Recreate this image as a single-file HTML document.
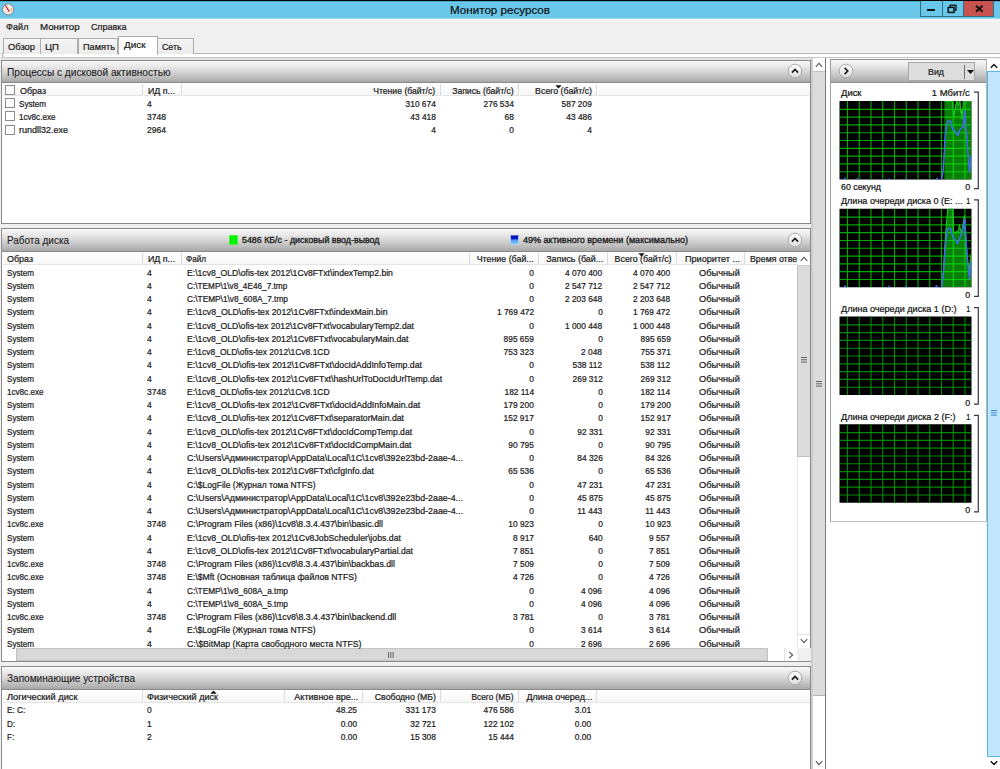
<!DOCTYPE html>
<html lang="ru"><head><meta charset="utf-8"><title>Монитор ресурсов</title>
<style>
html,body{margin:0;padding:0;}
body{width:1000px;height:769px;position:relative;overflow:hidden;background:#f0f0f0;font-family:"Liberation Sans", sans-serif;color:#1a1a1a;}
#app{position:absolute;left:0;top:0;width:1000px;height:769px;overflow:hidden;}
#app div{position:absolute;box-sizing:border-box;}
#app span{position:absolute;white-space:pre;display:block;-webkit-text-stroke:0.22px currentColor;}
#app svg{position:absolute;overflow:visible;}
</style></head><body><div id="app">
<div style="left:0px;top:0px;width:1000px;height:1px;background:#000;"></div>
<div style="left:0px;top:1px;width:1000px;height:17px;background:#69c8ea;"></div>
<div style="left:0px;top:1px;width:1000px;height:1px;background:#4fa9cc;"></div>
<div style="left:0px;top:18px;width:1000px;height:1px;background:#9fd8ec;"></div>
<div style="left:0px;top:19px;width:1000px;height:3px;background:#f4f4f6;"></div>
<svg style="left:0px;top:1px" width="18" height="17" viewBox="0 1 18 17"><circle cx="8.2" cy="9.4" r="5.6" fill="#f6f1ea" stroke="#74858a" stroke-width="1"/><circle cx="8.2" cy="9.4" r="4.3" fill="none" stroke="#e9ddd0" stroke-width="0.8"/><path d="M4.6 5.3 L5.9 5.2 L9.9 11.2 L8.8 12 Z" fill="#dc1414"/><path d="M11.3 8 L11.5 10.9" stroke="#ee8a5a" stroke-width="0.9"/></svg>
<div style="left:920px;top:1px;width:73.5px;height:15.5px;background:#69c8ea;border:1px solid #2d6f88;border-top:none;"></div>
<div style="left:941.5px;top:1px;width:1px;height:15px;background:#2d6f88;"></div>
<div style="left:962.5px;top:1px;width:30px;height:14.6px;background:#c8524f;border-left:1px solid #2d6f88;"></div>
<div style="left:927px;top:9.3px;width:7.8px;height:2px;background:#111;"></div>
<svg style="left:947px;top:4px" width="11" height="10" viewBox="0 0 11 10"><rect x="3.2" y="1.2" width="5.8" height="5" fill="none" stroke="#111" stroke-width="1.3"/><rect x="1.2" y="3.4" width="5.8" height="5" fill="#69c8ea" stroke="#111" stroke-width="1.5"/></svg>
<svg style="left:975px;top:5px" width="9" height="8" viewBox="0 0 9 8"><path d="M1 0.8 L7.6 6.8 M7.6 0.8 L1 6.8" stroke="#111" stroke-width="2"/></svg>
<div style="left:1.5px;top:53.2px;width:999px;height:4.6px;background:#fff;border-top:1px solid #b4b4b4;border-bottom:1px solid #c4c4c4;border-left:1px solid #b4b4b4;"></div>
<div style="left:2.5px;top:38.3px;width:38px;height:15.4px;background:linear-gradient(#f4f4f4,#ebebeb);border:1px solid #acacac;border-bottom:none;"></div>
<div style="left:40px;top:38.3px;width:37.5px;height:15.4px;background:linear-gradient(#f4f4f4,#ebebeb);border:1px solid #acacac;border-bottom:none;"></div>
<div style="left:77.5px;top:38.3px;width:40px;height:15.4px;background:linear-gradient(#f4f4f4,#ebebeb);border:1px solid #acacac;border-bottom:none;"></div>
<div style="left:157px;top:38.3px;width:36.5px;height:15.4px;background:linear-gradient(#f4f4f4,#ebebeb);border:1px solid #acacac;border-bottom:none;"></div>
<div style="left:117.5px;top:36px;width:40px;height:19px;background:#fff;border:1px solid #acacac;border-bottom:none;"></div>
<div style="left:0px;top:58px;width:811px;height:2px;background:#e6e6ea;"></div>
<div style="left:1px;top:59.5px;width:810px;height:164.0px;background:#fff;border:1px solid #8a8a8a;"></div>
<div style="left:2px;top:60.5px;width:808px;height:21.8px;background:linear-gradient(#f9f9f9 0%,#e6e6e6 30%,#cacaca 65%,#a8a8a8 100%);"></div>
<div style="left:2px;top:82.1px;width:808px;height:1.2px;background:#8a8a8a;"></div>
<svg style="left:787px;top:63.099999999999994px" width="16" height="16" viewBox="0 0 16 16"><defs><linearGradient id="g59" x1="0" y1="0" x2="0" y2="1"><stop offset="0" stop-color="#ffffff"/><stop offset="1" stop-color="#dcdcdc"/></linearGradient></defs><circle cx="8" cy="8" r="6.8" fill="url(#g59)" stroke="#a2a2a2" stroke-width="0.9"/><path d="M4.9 9.6 L8 6.5 L11.1 9.6" fill="none" stroke="#1a1a1a" stroke-width="1.7"/></svg>
<div style="left:2.5px;top:83.3px;width:807.5px;height:13px;background:linear-gradient(#ffffff,#f7f7f7);border-bottom:1px solid #e4e4e4;"></div>
<div style="left:141.5px;top:83.5px;width:1px;height:12.5px;background:#dcdcdc;"></div>
<div style="left:142.5px;top:83.5px;width:1px;height:12.5px;background:#fafafa;"></div>
<div style="left:181.0px;top:83.5px;width:1px;height:12.5px;background:#dcdcdc;"></div>
<div style="left:182.0px;top:83.5px;width:1px;height:12.5px;background:#fafafa;"></div>
<div style="left:440.0px;top:83.5px;width:1px;height:12.5px;background:#dcdcdc;"></div>
<div style="left:441.0px;top:83.5px;width:1px;height:12.5px;background:#fafafa;"></div>
<div style="left:518.0px;top:83.5px;width:1px;height:12.5px;background:#dcdcdc;"></div>
<div style="left:519.0px;top:83.5px;width:1px;height:12.5px;background:#fafafa;"></div>
<div style="left:595.5px;top:83.5px;width:1px;height:12.5px;background:#dcdcdc;"></div>
<div style="left:596.5px;top:83.5px;width:1px;height:12.5px;background:#fafafa;"></div>
<div style="left:5px;top:85px;width:10px;height:10px;background:#fff;border:1px solid #8c8c8c;"></div>
<svg style="left:554.5px;top:84.5px" width="7" height="4" viewBox="0 0 7 4"><path d="M0.3 0.2 L6.7 0.2 L3.5 3.6 Z" fill="#111"/></svg>
<div style="left:5px;top:98.0px;width:10px;height:10px;background:#fff;border:1px solid #8c8c8c;"></div>
<div style="left:5px;top:111.25px;width:10px;height:10px;background:#fff;border:1px solid #8c8c8c;"></div>
<div style="left:5px;top:124.5px;width:10px;height:10px;background:#fff;border:1px solid #8c8c8c;"></div>
<div style="left:1px;top:228px;width:810px;height:433.5px;background:#fff;border:1px solid #8a8a8a;"></div>
<div style="left:2px;top:229px;width:808px;height:21.8px;background:linear-gradient(#f9f9f9 0%,#e6e6e6 30%,#cacaca 65%,#a8a8a8 100%);"></div>
<div style="left:2px;top:250.6px;width:808px;height:1.2px;background:#8a8a8a;"></div>
<svg style="left:787px;top:231.6px" width="16" height="16" viewBox="0 0 16 16"><defs><linearGradient id="g228" x1="0" y1="0" x2="0" y2="1"><stop offset="0" stop-color="#ffffff"/><stop offset="1" stop-color="#dcdcdc"/></linearGradient></defs><circle cx="8" cy="8" r="6.8" fill="url(#g228)" stroke="#a2a2a2" stroke-width="0.9"/><path d="M4.9 9.6 L8 6.5 L11.1 9.6" fill="none" stroke="#1a1a1a" stroke-width="1.7"/></svg>
<div style="left:229px;top:235px;width:9px;height:10px;background:#00f200;border:1px solid #4cf04c;"></div>
<div style="left:510px;top:235px;width:9px;height:10px;background:linear-gradient(#0010c4 0%,#0010c4 36%,#4f9cf5 48%,#86c4ff 100%);border:1px solid #b4d2ee;border-top-color:#5a68c8;"></div>
<div style="left:2.5px;top:251.8px;width:795.0px;height:13px;background:linear-gradient(#ffffff,#f7f7f7);border-bottom:1px solid #e4e4e4;"></div>
<div style="left:141.5px;top:252px;width:1px;height:12.5px;background:#dcdcdc;"></div>
<div style="left:142.5px;top:252px;width:1px;height:12.5px;background:#fafafa;"></div>
<div style="left:181.0px;top:252px;width:1px;height:12.5px;background:#dcdcdc;"></div>
<div style="left:182.0px;top:252px;width:1px;height:12.5px;background:#fafafa;"></div>
<div style="left:468.5px;top:252px;width:1px;height:12.5px;background:#dcdcdc;"></div>
<div style="left:469.5px;top:252px;width:1px;height:12.5px;background:#fafafa;"></div>
<div style="left:538.0px;top:252px;width:1px;height:12.5px;background:#dcdcdc;"></div>
<div style="left:539.0px;top:252px;width:1px;height:12.5px;background:#fafafa;"></div>
<div style="left:607.0px;top:252px;width:1px;height:12.5px;background:#dcdcdc;"></div>
<div style="left:608.0px;top:252px;width:1px;height:12.5px;background:#fafafa;"></div>
<div style="left:675.5px;top:252px;width:1px;height:12.5px;background:#dcdcdc;"></div>
<div style="left:676.5px;top:252px;width:1px;height:12.5px;background:#fafafa;"></div>
<div style="left:744.0px;top:252px;width:1px;height:12.5px;background:#dcdcdc;"></div>
<div style="left:745.0px;top:252px;width:1px;height:12.5px;background:#fafafa;"></div>
<svg style="left:638px;top:252.6px" width="7" height="4" viewBox="0 0 7 4"><path d="M0.3 0.2 L6.7 0.2 L3.5 3.6 Z" fill="#111"/></svg>
<div style="left:2.5px;top:647.5px;width:808px;height:13.2px;background:#f0f0f0;"></div>
<div style="left:2.5px;top:647.5px;width:13px;height:13px;background:#fff;"></div>
<svg style="left:6px;top:650.5px" width="6" height="8" viewBox="0 0 6 8"><path d="M4.8 0.8 L1.4 4 L4.8 7.2" fill="none" stroke="#555" stroke-width="1.1"/></svg>
<div style="left:2.5px;top:647.5px;width:795px;height:13.2px;background:#fff;"></div>
<div style="left:16px;top:648px;width:752px;height:12.5px;background:#d8d8d8;border:1px solid #c4c4c4;"></div>
<div style="left:784px;top:648px;width:1px;height:12px;background:#e8e8e8;"></div>
<svg style="left:387.5px;top:651.5px" width="6" height="6" viewBox="0 0 6 6"><path d="M0.5 0 V6 M2.8 0 V6 M5.1 0 V6" stroke="#555" stroke-width="0.9"/></svg>
<div style="left:784px;top:648px;width:13px;height:13px;background:#fff;border-left:1px solid #e2e2e2;"></div>
<svg style="left:787.5px;top:650.5px" width="6" height="8" viewBox="0 0 6 8"><path d="M1.2 0.8 L4.6 4 L1.2 7.2" fill="none" stroke="#555" stroke-width="1.1"/></svg>
<div style="left:797.5px;top:251.8px;width:12.8px;height:396px;background:#fff;"></div>
<div style="left:797px;top:634px;width:13px;height:1px;background:#e4e4e4;"></div>
<div style="left:797px;top:647px;width:13px;height:1px;background:#e4e4e4;"></div>
<div style="left:797.5px;top:251.8px;width:12.8px;height:12.7px;background:#fff;"></div>
<svg style="left:800px;top:255.5px" width="8" height="6" viewBox="0 0 8 6"><path d="M0.8 4.8 L4 1.4 L7.2 4.8" fill="none" stroke="#555" stroke-width="1.1"/></svg>
<div style="left:797px;top:265px;width:13px;height:191.5px;background:#dcdcdc;border:1px solid #c0c0c0;border-right:none;border-top-color:#cfcfcf;"></div>
<svg style="left:801px;top:357px" width="6" height="6" viewBox="0 0 6 6"><path d="M0 0.5 H6 M0 2.8 H6 M0 5.1 H6" stroke="#555" stroke-width="0.9"/></svg>
<div style="left:797.5px;top:634.5px;width:12.8px;height:13px;background:#fff;"></div>
<svg style="left:800px;top:638px" width="8" height="6" viewBox="0 0 8 6"><path d="M0.8 1.2 L4 4.6 L7.2 1.2" fill="none" stroke="#555" stroke-width="1.1"/></svg>
<div style="left:797px;top:648px;width:13px;height:13px;background:#f0f0f0;"></div>
<div style="left:797px;top:457px;width:1px;height:191px;background:#e6e6e6;"></div>
<div style="left:1.5px;top:660.5px;width:809.5px;height:1px;background:#8a8a8a;"></div>
<div style="left:1px;top:666px;width:810px;height:114px;background:#fff;border:1px solid #8a8a8a;"></div>
<div style="left:2px;top:667px;width:808px;height:21.8px;background:linear-gradient(#f9f9f9 0%,#e6e6e6 30%,#cacaca 65%,#a8a8a8 100%);"></div>
<div style="left:2px;top:688.6px;width:808px;height:1.2px;background:#8a8a8a;"></div>
<svg style="left:787px;top:669.6px" width="16" height="16" viewBox="0 0 16 16"><defs><linearGradient id="g666" x1="0" y1="0" x2="0" y2="1"><stop offset="0" stop-color="#ffffff"/><stop offset="1" stop-color="#dcdcdc"/></linearGradient></defs><circle cx="8" cy="8" r="6.8" fill="url(#g666)" stroke="#a2a2a2" stroke-width="0.9"/><path d="M4.9 9.6 L8 6.5 L11.1 9.6" fill="none" stroke="#1a1a1a" stroke-width="1.7"/></svg>
<div style="left:2.5px;top:689.5px;width:807.5px;height:13px;background:linear-gradient(#ffffff,#f7f7f7);border-bottom:1px solid #e4e4e4;"></div>
<div style="left:142.0px;top:690px;width:1px;height:12.5px;background:#dcdcdc;"></div>
<div style="left:143.0px;top:690px;width:1px;height:12.5px;background:#fafafa;"></div>
<div style="left:284.0px;top:690px;width:1px;height:12.5px;background:#dcdcdc;"></div>
<div style="left:285.0px;top:690px;width:1px;height:12.5px;background:#fafafa;"></div>
<div style="left:361.5px;top:690px;width:1px;height:12.5px;background:#dcdcdc;"></div>
<div style="left:362.5px;top:690px;width:1px;height:12.5px;background:#fafafa;"></div>
<div style="left:440.0px;top:690px;width:1px;height:12.5px;background:#dcdcdc;"></div>
<div style="left:441.0px;top:690px;width:1px;height:12.5px;background:#fafafa;"></div>
<div style="left:518.0px;top:690px;width:1px;height:12.5px;background:#dcdcdc;"></div>
<div style="left:519.0px;top:690px;width:1px;height:12.5px;background:#fafafa;"></div>
<div style="left:595.5px;top:690px;width:1px;height:12.5px;background:#dcdcdc;"></div>
<div style="left:596.5px;top:690px;width:1px;height:12.5px;background:#fafafa;"></div>
<svg style="left:209.5px;top:690px" width="7" height="4" viewBox="0 0 7 4"><path d="M0.3 3.8 L6.7 3.8 L3.5 0.4 Z" fill="#111"/></svg>
<div style="left:811px;top:58px;width:2px;height:711px;background:#cecece;"></div>
<div style="left:813px;top:58px;width:12px;height:711px;background:#fff;"></div>
<div style="left:825px;top:58px;width:1px;height:711px;background:#7a7a7a;"></div>
<div style="left:811px;top:57px;width:15px;height:1px;background:#c8c8c8;"></div>
<svg style="left:815px;top:62px" width="8" height="6" viewBox="0 0 8 6"><path d="M0.8 4.8 L4 1.4 L7.2 4.8" fill="none" stroke="#555" stroke-width="1.1"/></svg>
<div style="left:813px;top:71px;width:12px;height:625px;background:#dcdcdc;border-top:1px solid #c2c2c2;border-bottom:1px solid #b4b4b4;"></div>
<svg style="left:816px;top:380.5px" width="6" height="6" viewBox="0 0 6 6"><path d="M0 0.5 H6 M0 2.8 H6 M0 5.1 H6" stroke="#555" stroke-width="0.9"/></svg>
<svg style="left:815px;top:759.5px" width="8" height="6" viewBox="0 0 8 6"><path d="M0.8 1.2 L4 4.6 L7.2 1.2" fill="none" stroke="#555" stroke-width="1.1"/></svg>
<div style="left:826px;top:58px;width:161.5px;height:711px;background:#fff;"></div>
<div style="left:830px;top:59px;width:157px;height:462.5px;background:#fff;border:1px solid #b4b4b4;border-left-color:#a0a0a0;border-top-color:#8e8e8e;border-bottom-color:#c2c2c2;"></div>
<div style="left:831px;top:60px;width:155px;height:22px;background:linear-gradient(#f9f9f9 0%,#e6e6e6 30%,#cacaca 65%,#a8a8a8 100%);"></div>
<div style="left:831px;top:82px;width:155px;height:1px;background:#909090;"></div>
<svg style="left:838px;top:63px" width="16" height="16" viewBox="0 0 16 16"><defs><linearGradient id="gr" x1="0" y1="0" x2="0" y2="1"><stop offset="0" stop-color="#ffffff"/><stop offset="1" stop-color="#dcdcdc"/></linearGradient></defs><circle cx="8" cy="8" r="6.8" fill="url(#gr)" stroke="#a2a2a2" stroke-width="0.9"/><path d="M6.6 4.9 L9.7 8 L6.6 11.1" fill="none" stroke="#1a1a1a" stroke-width="1.7"/></svg>
<div style="left:908px;top:62px;width:67px;height:18.5px;background:#dedede;border:1px solid #a8a8a8;"></div>
<div style="left:963.8px;top:64.5px;width:1px;height:14px;background:#6e6e6e;"></div>
<svg style="left:966.5px;top:69.8px" width="7" height="4" viewBox="0 0 7 4"><path d="M0 0 L7 0 L3.5 4 Z" fill="#111"/></svg>
<svg style="left:830px;top:59px" width="156" height="463" viewBox="830 59 156 463"><clipPath id="cp1"><rect x="839.5" y="101" width="132" height="78.5"/></clipPath><rect x="839.5" y="101" width="132" height="78.5" fill="#000"/><g clip-path="url(#cp1)"><path d="M847.50 101 V179.5 M859.25 101 V179.5 M871.00 101 V179.5 M882.75 101 V179.5 M894.50 101 V179.5 M906.25 101 V179.5 M918.00 101 V179.5 M929.75 101 V179.5 M941.50 101 V179.5 M953.25 101 V179.5 M965.00 101 V179.5 M839.5 171.70 H971.5 M839.5 163.90 H971.5 M839.5 156.10 H971.5 M839.5 148.30 H971.5 M839.5 140.50 H971.5 M839.5 132.70 H971.5 M839.5 124.90 H971.5 M839.5 117.10 H971.5 M839.5 109.30 H971.5 " stroke="#00a800" stroke-width="1.15" fill="none"/><polygon points="944.4,179.5 944.4,101.0 952.4,101.0 953.6,117.3 955.6,106.0 956.6,101.0 957.2,101.0 957.8,105.5 958.6,105.5 959.4,101.0 960.0,101.0 960.8,113.0 961.4,110.0 962.0,119.4 963.4,101.0 971.5,101.0 971.5,179.5" fill="rgba(20,240,20,0.52)"/><polyline points="944.4,101.0 952.4,101.0 953.6,117.3 955.6,106.0 956.6,101.0 957.2,101.0 957.8,105.5 958.6,105.5 959.4,101.0 960.0,101.0 960.8,113.0 961.4,110.0 962.0,119.4 963.4,101.0 971.5,101.0" fill="none" stroke="#19d219" stroke-width="1"/><polyline points="839.5,180.6 844.0,180.6 845.0,178.2 846.0,180.6 856.0,180.6 857.5,178.8 859.0,180.6 888.0,180.6 889.0,179.0 890.0,180.6 905.0,180.6 906.0,178.8 907.0,180.6 936.0,180.6 937.0,178.4 938.0,180.6 941.5,180.0 943.2,170.0 944.3,152.0 945.2,137.6 946.4,127.0 947.8,121.0 950.6,120.9 952.4,128.2 955.0,131.5 957.9,135.5 960.0,129.3 963.1,127.2 963.9,121.0 964.7,110.5 965.7,124.0 966.8,137.6 968.0,155.0 969.6,172.0 971.3,155.0" fill="none" stroke="#3f6cf0" stroke-width="1.5" stroke-linejoin="round"/></g><path d="M974 92.2 H978.3 V188.6 H974" fill="none" stroke="#3a3a3a" stroke-width="1.2"/><clipPath id="cp2"><rect x="839.5" y="208.75" width="132" height="78.5"/></clipPath><rect x="839.5" y="208.75" width="132" height="78.5" fill="#000"/><g clip-path="url(#cp2)"><path d="M847.50 208.75 V287.25 M859.25 208.75 V287.25 M871.00 208.75 V287.25 M882.75 208.75 V287.25 M894.50 208.75 V287.25 M906.25 208.75 V287.25 M918.00 208.75 V287.25 M929.75 208.75 V287.25 M941.50 208.75 V287.25 M953.25 208.75 V287.25 M965.00 208.75 V287.25 M839.5 279.45 H971.5 M839.5 271.65 H971.5 M839.5 263.85 H971.5 M839.5 256.05 H971.5 M839.5 248.25 H971.5 M839.5 240.45 H971.5 M839.5 232.65 H971.5 M839.5 224.85 H971.5 M839.5 217.05 H971.5 " stroke="#00a800" stroke-width="1.15" fill="none"/><polygon points="941.5,287.2 943.5,270.0 945.3,238.0 946.5,222.0 947.8,208.8 952.8,208.8 953.6,231.0 955.0,233.5 956.5,231.0 957.5,232.5 958.8,229.0 959.6,224.5 960.6,231.0 961.6,232.0 963.0,224.0 964.5,215.5 965.8,236.0 967.2,258.0 969.0,270.0 970.2,262.0 971.5,252.0 971.5,287.2" fill="rgba(20,240,20,0.52)"/><polyline points="941.5,287.2 943.5,270.0 945.3,238.0 946.5,222.0 947.8,208.8 952.8,208.8 953.6,231.0 955.0,233.5 956.5,231.0 957.5,232.5 958.8,229.0 959.6,224.5 960.6,231.0 961.6,232.0 963.0,224.0 964.5,215.5 965.8,236.0 967.2,258.0 969.0,270.0 970.2,262.0 971.5,252.0" fill="none" stroke="#19d219" stroke-width="1"/><polyline points="839.5,288.4 844.0,288.4 845.0,285.9 846.0,288.4 888.0,288.4 889.0,286.6 890.0,288.4 905.0,288.4 906.0,286.6 907.0,288.4 935.0,288.4 936.5,286.0 938.0,288.4 941.5,287.5 943.5,272.0 945.0,250.0 946.5,236.0 948.0,228.5 950.5,228.5 952.0,234.0 953.5,238.5 955.5,240.0 957.6,243.5 959.5,239.0 962.0,232.5 963.4,226.0 964.6,219.0 965.6,232.0 966.8,252.0 968.2,268.0 969.6,279.0 971.0,262.0" fill="none" stroke="#3f6cf0" stroke-width="1.5" stroke-linejoin="round"/></g><path d="M974 199.9 H978.3 V296.4 H974" fill="none" stroke="#3a3a3a" stroke-width="1.2"/><clipPath id="cp3"><rect x="839.5" y="316.5" width="132" height="78.5"/></clipPath><rect x="839.5" y="316.5" width="132" height="78.5" fill="#000"/><g clip-path="url(#cp3)"><path d="M847.50 316.5 V395.0 M859.25 316.5 V395.0 M871.00 316.5 V395.0 M882.75 316.5 V395.0 M894.50 316.5 V395.0 M906.25 316.5 V395.0 M918.00 316.5 V395.0 M929.75 316.5 V395.0 M941.50 316.5 V395.0 M953.25 316.5 V395.0 M965.00 316.5 V395.0 M839.5 387.20 H971.5 M839.5 379.40 H971.5 M839.5 371.60 H971.5 M839.5 363.80 H971.5 M839.5 356.00 H971.5 M839.5 348.20 H971.5 M839.5 340.40 H971.5 M839.5 332.60 H971.5 M839.5 324.80 H971.5 " stroke="#008a00" stroke-width="1.15" fill="none"/></g><path d="M974 307.7 H978.3 V404.1 H974" fill="none" stroke="#3a3a3a" stroke-width="1.2"/><clipPath id="cp4"><rect x="839.5" y="424.25" width="132" height="78.5"/></clipPath><rect x="839.5" y="424.25" width="132" height="78.5" fill="#000"/><g clip-path="url(#cp4)"><path d="M847.50 424.25 V502.75 M859.25 424.25 V502.75 M871.00 424.25 V502.75 M882.75 424.25 V502.75 M894.50 424.25 V502.75 M906.25 424.25 V502.75 M918.00 424.25 V502.75 M929.75 424.25 V502.75 M941.50 424.25 V502.75 M953.25 424.25 V502.75 M965.00 424.25 V502.75 M839.5 494.95 H971.5 M839.5 487.15 H971.5 M839.5 479.35 H971.5 M839.5 471.55 H971.5 M839.5 463.75 H971.5 M839.5 455.95 H971.5 M839.5 448.15 H971.5 M839.5 440.35 H971.5 M839.5 432.55 H971.5 " stroke="#008a00" stroke-width="1.15" fill="none"/></g><path d="M974 415.4 H978.3 V511.9 H974" fill="none" stroke="#3a3a3a" stroke-width="1.2"/></svg>
<div style="left:987.5px;top:58.5px;width:12.5px;height:711px;background:#fff;"></div>
<svg style="left:990px;top:62.7px" width="8" height="6" viewBox="0 0 8 6"><path d="M0.8 4.8 L4 1.4 L7.2 4.8" fill="none" stroke="#111" stroke-width="1.4"/></svg>
<div style="left:987.3px;top:71px;width:13px;height:685.5px;background:#bfe6fb;border:1px solid #58b4e4;border-right:none;"></div>
<svg style="left:991px;top:410px" width="6" height="6" viewBox="0 0 6 6"><path d="M0 0.5 H6 M0 2.8 H6 M0 5.1 H6" stroke="#2f7fd0" stroke-width="0.9"/></svg>
<svg style="left:990px;top:759.5px" width="8" height="6" viewBox="0 0 8 6"><path d="M0.8 1.2 L4 4.6 L7.2 1.2" fill="none" stroke="#111" stroke-width="1.4"/></svg>
<span style="top:4.83px;font-size:11.3px;line-height:11.3px;color:#111;left:450.30px;transform-origin:0 0;transform:scaleX(1.0288);">Монитор ресурсов</span>
<span style="top:21.87px;font-size:9.6px;line-height:9.6px;left:6.00px;transform-origin:0 0;transform:scaleX(0.9536);">Файл</span>
<span style="top:21.87px;font-size:9.6px;line-height:9.6px;left:39.70px;transform-origin:0 0;transform:scaleX(1.0138);">Монитор</span>
<span style="top:21.87px;font-size:9.6px;line-height:9.6px;left:90.50px;transform-origin:0 0;transform:scaleX(0.9431);">Справка</span>
<span style="top:41.97px;font-size:9.6px;line-height:9.6px;left:7.50px;transform-origin:0 0;transform:scaleX(0.9741);">Обзор</span>
<span style="top:41.97px;font-size:9.6px;line-height:9.6px;left:45.00px;transform-origin:0 0;">ЦП</span>
<span style="top:41.97px;font-size:9.6px;line-height:9.6px;left:82.50px;transform-origin:0 0;transform:scaleX(0.9575);">Память</span>
<span style="top:41.97px;font-size:9.6px;line-height:9.6px;left:162.00px;transform-origin:0 0;transform:scaleX(0.9136);">Сеть</span>
<span style="top:39.97px;font-size:9.6px;line-height:9.6px;left:123.50px;transform-origin:0 0;transform:scaleX(1.0307);">Диск</span>
<span style="top:67.94px;font-size:10.0px;line-height:10.0px;color:#1c1c1c;left:6.80px;transform-origin:0 0;transform:scaleX(1.0109);-webkit-text-stroke-width:0.1px;">Процессы с дисковой активностью</span>
<span style="top:86.55px;font-size:8.8px;line-height:8.8px;left:20.00px;transform-origin:0 0;transform:scaleX(1.0153);">Образ</span>
<span style="top:86.55px;font-size:8.8px;line-height:8.8px;left:147.50px;transform-origin:0 0;transform:scaleX(1.0064);">ИД п...</span>
<span style="top:86.55px;font-size:8.8px;line-height:8.8px;right:564.50px;transform-origin:100% 0;transform:scaleX(0.9814);">Чтение (байт/с)</span>
<span style="top:86.55px;font-size:8.8px;line-height:8.8px;right:486.50px;transform-origin:100% 0;transform:scaleX(0.9811);">Запись (байт/с)</span>
<span style="top:86.55px;font-size:8.8px;line-height:8.8px;right:408.00px;transform-origin:100% 0;">Всего (байт/с)</span>
<span style="top:99.55px;font-size:8.8px;line-height:8.8px;left:19.00px;transform-origin:0 0;transform:scaleX(0.9201);">System</span>
<span style="top:99.55px;font-size:8.8px;line-height:8.8px;left:147.20px;transform-origin:0 0;transform:scaleX(0.9700);">4</span>
<span style="top:99.55px;font-size:8.8px;line-height:8.8px;right:564.50px;transform-origin:100% 0;transform:scaleX(0.9500);">310 674</span>
<span style="top:99.55px;font-size:8.8px;line-height:8.8px;right:486.50px;transform-origin:100% 0;transform:scaleX(0.9500);">276 534</span>
<span style="top:99.55px;font-size:8.8px;line-height:8.8px;right:408.00px;transform-origin:100% 0;transform:scaleX(0.9500);">587 209</span>
<span style="top:112.80px;font-size:8.8px;line-height:8.8px;left:19.00px;transform-origin:0 0;transform:scaleX(0.9215);">1cv8c.exe</span>
<span style="top:112.80px;font-size:8.8px;line-height:8.8px;left:147.20px;transform-origin:0 0;transform:scaleX(0.9700);">3748</span>
<span style="top:112.80px;font-size:8.8px;line-height:8.8px;right:564.50px;transform-origin:100% 0;transform:scaleX(0.9500);">43 418</span>
<span style="top:112.80px;font-size:8.8px;line-height:8.8px;right:486.50px;transform-origin:100% 0;transform:scaleX(0.9500);">68</span>
<span style="top:112.80px;font-size:8.8px;line-height:8.8px;right:408.00px;transform-origin:100% 0;transform:scaleX(0.9500);">43 486</span>
<span style="top:126.05px;font-size:8.8px;line-height:8.8px;left:19.00px;transform-origin:0 0;transform:scaleX(1.0222);">rundll32.exe</span>
<span style="top:126.05px;font-size:8.8px;line-height:8.8px;left:147.20px;transform-origin:0 0;transform:scaleX(0.9700);">2964</span>
<span style="top:126.05px;font-size:8.8px;line-height:8.8px;right:564.50px;transform-origin:100% 0;transform:scaleX(0.9500);">4</span>
<span style="top:126.05px;font-size:8.8px;line-height:8.8px;right:486.50px;transform-origin:100% 0;transform:scaleX(0.9500);">0</span>
<span style="top:126.05px;font-size:8.8px;line-height:8.8px;right:408.00px;transform-origin:100% 0;transform:scaleX(0.9500);">4</span>
<span style="top:236.44px;font-size:10.0px;line-height:10.0px;color:#1c1c1c;left:6.80px;transform-origin:0 0;transform:scaleX(0.9942);-webkit-text-stroke-width:0.1px;">Работа диска</span>
<span style="top:235.88px;font-size:9.0px;line-height:9.0px;color:#222;left:242.00px;transform-origin:0 0;transform:scaleX(0.9837);-webkit-text-stroke-width:0.36px;">5486 КБ/с - дисковый ввод-вывод</span>
<span style="top:235.88px;font-size:9.0px;line-height:9.0px;color:#222;left:523.00px;transform-origin:0 0;transform:scaleX(1.0036);-webkit-text-stroke-width:0.36px;">49% активного времени (максимально)</span>
<span style="top:254.85px;font-size:8.8px;line-height:8.8px;left:7.00px;transform-origin:0 0;transform:scaleX(1.0153);">Образ</span>
<span style="top:254.85px;font-size:8.8px;line-height:8.8px;left:147.50px;transform-origin:0 0;transform:scaleX(1.0064);">ИД п...</span>
<span style="top:254.85px;font-size:8.8px;line-height:8.8px;left:186.00px;transform-origin:0 0;transform:scaleX(0.9242);">Файл</span>
<span style="top:254.85px;font-size:8.8px;line-height:8.8px;right:466.00px;transform-origin:100% 0;transform:scaleX(1.0052);">Чтение (бай...</span>
<span style="top:254.85px;font-size:8.8px;line-height:8.8px;right:397.00px;transform-origin:100% 0;transform:scaleX(1.0139);">Запись (бай...</span>
<span style="top:254.85px;font-size:8.8px;line-height:8.8px;right:328.50px;transform-origin:100% 0;">Всего (байт/с)</span>
<span style="top:254.85px;font-size:8.8px;line-height:8.8px;left:685.00px;transform-origin:0 0;transform:scaleX(1.0344);">Приоритет ...</span>
<span style="top:254.85px;font-size:8.8px;line-height:8.8px;left:750.00px;transform-origin:0 0;">Время отве</span>
<span style="top:268.55px;font-size:8.8px;line-height:8.8px;left:7.00px;transform-origin:0 0;transform:scaleX(0.9201);">System</span>
<span style="top:268.55px;font-size:8.8px;line-height:8.8px;left:147.20px;transform-origin:0 0;transform:scaleX(0.9700);">4</span>
<span style="top:268.55px;font-size:8.8px;line-height:8.8px;left:186.50px;transform-origin:0 0;transform:scaleX(0.9816);">E:\1cv8_OLD\ofis-tex 2012\1Cv8FTxt\indexTemp2.bin</span>
<span style="top:268.55px;font-size:8.8px;line-height:8.8px;right:466.00px;transform-origin:100% 0;transform:scaleX(0.9500);">0</span>
<span style="top:268.55px;font-size:8.8px;line-height:8.8px;right:397.50px;transform-origin:100% 0;transform:scaleX(0.9500);">4 070 400</span>
<span style="top:268.55px;font-size:8.8px;line-height:8.8px;right:329.50px;transform-origin:100% 0;transform:scaleX(0.9500);">4 070 400</span>
<span style="top:268.55px;font-size:8.8px;line-height:8.8px;right:260.50px;transform-origin:100% 0;transform:scaleX(1.0491);">Обычный</span>
<span style="top:281.80px;font-size:8.8px;line-height:8.8px;left:7.00px;transform-origin:0 0;transform:scaleX(0.9201);">System</span>
<span style="top:281.80px;font-size:8.8px;line-height:8.8px;left:147.20px;transform-origin:0 0;transform:scaleX(0.9700);">4</span>
<span style="top:281.80px;font-size:8.8px;line-height:8.8px;left:186.50px;transform-origin:0 0;transform:scaleX(0.9366);">C:\TEMP\1\v8_4E46_7.tmp</span>
<span style="top:281.80px;font-size:8.8px;line-height:8.8px;right:466.00px;transform-origin:100% 0;transform:scaleX(0.9500);">0</span>
<span style="top:281.80px;font-size:8.8px;line-height:8.8px;right:397.50px;transform-origin:100% 0;transform:scaleX(0.9500);">2 547 712</span>
<span style="top:281.80px;font-size:8.8px;line-height:8.8px;right:329.50px;transform-origin:100% 0;transform:scaleX(0.9500);">2 547 712</span>
<span style="top:281.80px;font-size:8.8px;line-height:8.8px;right:260.50px;transform-origin:100% 0;transform:scaleX(1.0491);">Обычный</span>
<span style="top:295.05px;font-size:8.8px;line-height:8.8px;left:7.00px;transform-origin:0 0;transform:scaleX(0.9201);">System</span>
<span style="top:295.05px;font-size:8.8px;line-height:8.8px;left:147.20px;transform-origin:0 0;transform:scaleX(0.9700);">4</span>
<span style="top:295.05px;font-size:8.8px;line-height:8.8px;left:186.50px;transform-origin:0 0;transform:scaleX(0.9422);">C:\TEMP\1\v8_608A_7.tmp</span>
<span style="top:295.05px;font-size:8.8px;line-height:8.8px;right:466.00px;transform-origin:100% 0;transform:scaleX(0.9500);">0</span>
<span style="top:295.05px;font-size:8.8px;line-height:8.8px;right:397.50px;transform-origin:100% 0;transform:scaleX(0.9500);">2 203 648</span>
<span style="top:295.05px;font-size:8.8px;line-height:8.8px;right:329.50px;transform-origin:100% 0;transform:scaleX(0.9500);">2 203 648</span>
<span style="top:295.05px;font-size:8.8px;line-height:8.8px;right:260.50px;transform-origin:100% 0;transform:scaleX(1.0491);">Обычный</span>
<span style="top:308.30px;font-size:8.8px;line-height:8.8px;left:7.00px;transform-origin:0 0;transform:scaleX(0.9201);">System</span>
<span style="top:308.30px;font-size:8.8px;line-height:8.8px;left:147.20px;transform-origin:0 0;transform:scaleX(0.9700);">4</span>
<span style="top:308.30px;font-size:8.8px;line-height:8.8px;left:186.50px;transform-origin:0 0;transform:scaleX(0.9904);">E:\1cv8_OLD\ofis-tex 2012\1Cv8FTxt\indexMain.bin</span>
<span style="top:308.30px;font-size:8.8px;line-height:8.8px;right:466.00px;transform-origin:100% 0;transform:scaleX(0.9500);">1 769 472</span>
<span style="top:308.30px;font-size:8.8px;line-height:8.8px;right:397.50px;transform-origin:100% 0;transform:scaleX(0.9500);">0</span>
<span style="top:308.30px;font-size:8.8px;line-height:8.8px;right:329.50px;transform-origin:100% 0;transform:scaleX(0.9500);">1 769 472</span>
<span style="top:308.30px;font-size:8.8px;line-height:8.8px;right:260.50px;transform-origin:100% 0;transform:scaleX(1.0491);">Обычный</span>
<span style="top:321.55px;font-size:8.8px;line-height:8.8px;left:7.00px;transform-origin:0 0;transform:scaleX(0.9201);">System</span>
<span style="top:321.55px;font-size:8.8px;line-height:8.8px;left:147.20px;transform-origin:0 0;transform:scaleX(0.9700);">4</span>
<span style="top:321.55px;font-size:8.8px;line-height:8.8px;left:186.50px;transform-origin:0 0;transform:scaleX(0.9790);">E:\1cv8_OLD\ofis-tex 2012\1Cv8FTxt\vocabularyTemp2.dat</span>
<span style="top:321.55px;font-size:8.8px;line-height:8.8px;right:466.00px;transform-origin:100% 0;transform:scaleX(0.9500);">0</span>
<span style="top:321.55px;font-size:8.8px;line-height:8.8px;right:397.50px;transform-origin:100% 0;transform:scaleX(0.9500);">1 000 448</span>
<span style="top:321.55px;font-size:8.8px;line-height:8.8px;right:329.50px;transform-origin:100% 0;transform:scaleX(0.9500);">1 000 448</span>
<span style="top:321.55px;font-size:8.8px;line-height:8.8px;right:260.50px;transform-origin:100% 0;transform:scaleX(1.0491);">Обычный</span>
<span style="top:334.80px;font-size:8.8px;line-height:8.8px;left:7.00px;transform-origin:0 0;transform:scaleX(0.9201);">System</span>
<span style="top:334.80px;font-size:8.8px;line-height:8.8px;left:147.20px;transform-origin:0 0;transform:scaleX(0.9700);">4</span>
<span style="top:334.80px;font-size:8.8px;line-height:8.8px;left:186.50px;transform-origin:0 0;transform:scaleX(0.9869);">E:\1cv8_OLD\ofis-tex 2012\1Cv8FTxt\vocabularyMain.dat</span>
<span style="top:334.80px;font-size:8.8px;line-height:8.8px;right:466.00px;transform-origin:100% 0;transform:scaleX(0.9500);">895 659</span>
<span style="top:334.80px;font-size:8.8px;line-height:8.8px;right:397.50px;transform-origin:100% 0;transform:scaleX(0.9500);">0</span>
<span style="top:334.80px;font-size:8.8px;line-height:8.8px;right:329.50px;transform-origin:100% 0;transform:scaleX(0.9500);">895 659</span>
<span style="top:334.80px;font-size:8.8px;line-height:8.8px;right:260.50px;transform-origin:100% 0;transform:scaleX(1.0491);">Обычный</span>
<span style="top:348.05px;font-size:8.8px;line-height:8.8px;left:7.00px;transform-origin:0 0;transform:scaleX(0.9201);">System</span>
<span style="top:348.05px;font-size:8.8px;line-height:8.8px;left:147.20px;transform-origin:0 0;transform:scaleX(0.9700);">4</span>
<span style="top:348.05px;font-size:8.8px;line-height:8.8px;left:186.50px;transform-origin:0 0;transform:scaleX(0.9625);">E:\1cv8_OLD\ofis-tex 2012\1Cv8.1CD</span>
<span style="top:348.05px;font-size:8.8px;line-height:8.8px;right:466.00px;transform-origin:100% 0;transform:scaleX(0.9500);">753 323</span>
<span style="top:348.05px;font-size:8.8px;line-height:8.8px;right:397.50px;transform-origin:100% 0;transform:scaleX(0.9500);">2 048</span>
<span style="top:348.05px;font-size:8.8px;line-height:8.8px;right:329.50px;transform-origin:100% 0;transform:scaleX(0.9500);">755 371</span>
<span style="top:348.05px;font-size:8.8px;line-height:8.8px;right:260.50px;transform-origin:100% 0;transform:scaleX(1.0491);">Обычный</span>
<span style="top:361.30px;font-size:8.8px;line-height:8.8px;left:7.00px;transform-origin:0 0;transform:scaleX(0.9201);">System</span>
<span style="top:361.30px;font-size:8.8px;line-height:8.8px;left:147.20px;transform-origin:0 0;transform:scaleX(0.9700);">4</span>
<span style="top:361.30px;font-size:8.8px;line-height:8.8px;left:186.50px;transform-origin:0 0;transform:scaleX(0.9950);">E:\1cv8_OLD\ofis-tex 2012\1Cv8FTxt\docIdAddInfoTemp.dat</span>
<span style="top:361.30px;font-size:8.8px;line-height:8.8px;right:466.00px;transform-origin:100% 0;transform:scaleX(0.9500);">0</span>
<span style="top:361.30px;font-size:8.8px;line-height:8.8px;right:397.50px;transform-origin:100% 0;transform:scaleX(0.9500);">538 112</span>
<span style="top:361.30px;font-size:8.8px;line-height:8.8px;right:329.50px;transform-origin:100% 0;transform:scaleX(0.9500);">538 112</span>
<span style="top:361.30px;font-size:8.8px;line-height:8.8px;right:260.50px;transform-origin:100% 0;transform:scaleX(1.0491);">Обычный</span>
<span style="top:374.55px;font-size:8.8px;line-height:8.8px;left:7.00px;transform-origin:0 0;transform:scaleX(0.9201);">System</span>
<span style="top:374.55px;font-size:8.8px;line-height:8.8px;left:147.20px;transform-origin:0 0;transform:scaleX(0.9700);">4</span>
<span style="top:374.55px;font-size:8.8px;line-height:8.8px;left:186.50px;transform-origin:0 0;transform:scaleX(0.9882);">E:\1cv8_OLD\ofis-tex 2012\1Cv8FTxt\hashUrlToDocIdUrlTemp.dat</span>
<span style="top:374.55px;font-size:8.8px;line-height:8.8px;right:466.00px;transform-origin:100% 0;transform:scaleX(0.9500);">0</span>
<span style="top:374.55px;font-size:8.8px;line-height:8.8px;right:397.50px;transform-origin:100% 0;transform:scaleX(0.9500);">269 312</span>
<span style="top:374.55px;font-size:8.8px;line-height:8.8px;right:329.50px;transform-origin:100% 0;transform:scaleX(0.9500);">269 312</span>
<span style="top:374.55px;font-size:8.8px;line-height:8.8px;right:260.50px;transform-origin:100% 0;transform:scaleX(1.0491);">Обычный</span>
<span style="top:387.80px;font-size:8.8px;line-height:8.8px;left:7.00px;transform-origin:0 0;transform:scaleX(0.9215);">1cv8c.exe</span>
<span style="top:387.80px;font-size:8.8px;line-height:8.8px;left:147.20px;transform-origin:0 0;transform:scaleX(0.9700);">3748</span>
<span style="top:387.80px;font-size:8.8px;line-height:8.8px;left:186.50px;transform-origin:0 0;transform:scaleX(0.9625);">E:\1cv8_OLD\ofis-tex 2012\1Cv8.1CD</span>
<span style="top:387.80px;font-size:8.8px;line-height:8.8px;right:466.00px;transform-origin:100% 0;transform:scaleX(0.9500);">182 114</span>
<span style="top:387.80px;font-size:8.8px;line-height:8.8px;right:397.50px;transform-origin:100% 0;transform:scaleX(0.9500);">0</span>
<span style="top:387.80px;font-size:8.8px;line-height:8.8px;right:329.50px;transform-origin:100% 0;transform:scaleX(0.9500);">182 114</span>
<span style="top:387.80px;font-size:8.8px;line-height:8.8px;right:260.50px;transform-origin:100% 0;transform:scaleX(1.0491);">Обычный</span>
<span style="top:401.05px;font-size:8.8px;line-height:8.8px;left:7.00px;transform-origin:0 0;transform:scaleX(0.9201);">System</span>
<span style="top:401.05px;font-size:8.8px;line-height:8.8px;left:147.20px;transform-origin:0 0;transform:scaleX(0.9700);">4</span>
<span style="top:401.05px;font-size:8.8px;line-height:8.8px;left:186.50px;transform-origin:0 0;">E:\1cv8_OLD\ofis-tex 2012\1Cv8FTxt\docIdAddInfoMain.dat</span>
<span style="top:401.05px;font-size:8.8px;line-height:8.8px;right:466.00px;transform-origin:100% 0;transform:scaleX(0.9500);">179 200</span>
<span style="top:401.05px;font-size:8.8px;line-height:8.8px;right:397.50px;transform-origin:100% 0;transform:scaleX(0.9500);">0</span>
<span style="top:401.05px;font-size:8.8px;line-height:8.8px;right:329.50px;transform-origin:100% 0;transform:scaleX(0.9500);">179 200</span>
<span style="top:401.05px;font-size:8.8px;line-height:8.8px;right:260.50px;transform-origin:100% 0;transform:scaleX(1.0491);">Обычный</span>
<span style="top:414.30px;font-size:8.8px;line-height:8.8px;left:7.00px;transform-origin:0 0;transform:scaleX(0.9201);">System</span>
<span style="top:414.30px;font-size:8.8px;line-height:8.8px;left:147.20px;transform-origin:0 0;transform:scaleX(0.9700);">4</span>
<span style="top:414.30px;font-size:8.8px;line-height:8.8px;left:186.50px;transform-origin:0 0;transform:scaleX(0.9907);">E:\1cv8_OLD\ofis-tex 2012\1Cv8FTxt\separatorMain.dat</span>
<span style="top:414.30px;font-size:8.8px;line-height:8.8px;right:466.00px;transform-origin:100% 0;transform:scaleX(0.9500);">152 917</span>
<span style="top:414.30px;font-size:8.8px;line-height:8.8px;right:397.50px;transform-origin:100% 0;transform:scaleX(0.9500);">0</span>
<span style="top:414.30px;font-size:8.8px;line-height:8.8px;right:329.50px;transform-origin:100% 0;transform:scaleX(0.9500);">152 917</span>
<span style="top:414.30px;font-size:8.8px;line-height:8.8px;right:260.50px;transform-origin:100% 0;transform:scaleX(1.0491);">Обычный</span>
<span style="top:427.55px;font-size:8.8px;line-height:8.8px;left:7.00px;transform-origin:0 0;transform:scaleX(0.9201);">System</span>
<span style="top:427.55px;font-size:8.8px;line-height:8.8px;left:147.20px;transform-origin:0 0;transform:scaleX(0.9700);">4</span>
<span style="top:427.55px;font-size:8.8px;line-height:8.8px;left:186.50px;transform-origin:0 0;transform:scaleX(0.9816);">E:\1cv8_OLD\ofis-tex 2012\1Cv8FTxt\docIdCompTemp.dat</span>
<span style="top:427.55px;font-size:8.8px;line-height:8.8px;right:466.00px;transform-origin:100% 0;transform:scaleX(0.9500);">0</span>
<span style="top:427.55px;font-size:8.8px;line-height:8.8px;right:397.50px;transform-origin:100% 0;transform:scaleX(0.9500);">92 331</span>
<span style="top:427.55px;font-size:8.8px;line-height:8.8px;right:329.50px;transform-origin:100% 0;transform:scaleX(0.9500);">92 331</span>
<span style="top:427.55px;font-size:8.8px;line-height:8.8px;right:260.50px;transform-origin:100% 0;transform:scaleX(1.0491);">Обычный</span>
<span style="top:440.80px;font-size:8.8px;line-height:8.8px;left:7.00px;transform-origin:0 0;transform:scaleX(0.9201);">System</span>
<span style="top:440.80px;font-size:8.8px;line-height:8.8px;left:147.20px;transform-origin:0 0;transform:scaleX(0.9700);">4</span>
<span style="top:440.80px;font-size:8.8px;line-height:8.8px;left:186.50px;transform-origin:0 0;transform:scaleX(0.9895);">E:\1cv8_OLD\ofis-tex 2012\1Cv8FTxt\docIdCompMain.dat</span>
<span style="top:440.80px;font-size:8.8px;line-height:8.8px;right:466.00px;transform-origin:100% 0;transform:scaleX(0.9500);">90 795</span>
<span style="top:440.80px;font-size:8.8px;line-height:8.8px;right:397.50px;transform-origin:100% 0;transform:scaleX(0.9500);">0</span>
<span style="top:440.80px;font-size:8.8px;line-height:8.8px;right:329.50px;transform-origin:100% 0;transform:scaleX(0.9500);">90 795</span>
<span style="top:440.80px;font-size:8.8px;line-height:8.8px;right:260.50px;transform-origin:100% 0;transform:scaleX(1.0491);">Обычный</span>
<span style="top:454.05px;font-size:8.8px;line-height:8.8px;left:7.00px;transform-origin:0 0;transform:scaleX(0.9201);">System</span>
<span style="top:454.05px;font-size:8.8px;line-height:8.8px;left:147.20px;transform-origin:0 0;transform:scaleX(0.9700);">4</span>
<span style="top:454.05px;font-size:8.8px;line-height:8.8px;left:186.50px;transform-origin:0 0;transform:scaleX(1.0064);">C:\Users\Администратор\AppData\Local\1C\1cv8\392e23bd-2aae-4...</span>
<span style="top:454.05px;font-size:8.8px;line-height:8.8px;right:466.00px;transform-origin:100% 0;transform:scaleX(0.9500);">0</span>
<span style="top:454.05px;font-size:8.8px;line-height:8.8px;right:397.50px;transform-origin:100% 0;transform:scaleX(0.9500);">84 326</span>
<span style="top:454.05px;font-size:8.8px;line-height:8.8px;right:329.50px;transform-origin:100% 0;transform:scaleX(0.9500);">84 326</span>
<span style="top:454.05px;font-size:8.8px;line-height:8.8px;right:260.50px;transform-origin:100% 0;transform:scaleX(1.0491);">Обычный</span>
<span style="top:467.30px;font-size:8.8px;line-height:8.8px;left:7.00px;transform-origin:0 0;transform:scaleX(0.9201);">System</span>
<span style="top:467.30px;font-size:8.8px;line-height:8.8px;left:147.20px;transform-origin:0 0;transform:scaleX(0.9700);">4</span>
<span style="top:467.30px;font-size:8.8px;line-height:8.8px;left:186.50px;transform-origin:0 0;transform:scaleX(0.9882);">E:\1cv8_OLD\ofis-tex 2012\1Cv8FTxt\cfgInfo.dat</span>
<span style="top:467.30px;font-size:8.8px;line-height:8.8px;right:466.00px;transform-origin:100% 0;transform:scaleX(0.9500);">65 536</span>
<span style="top:467.30px;font-size:8.8px;line-height:8.8px;right:397.50px;transform-origin:100% 0;transform:scaleX(0.9500);">0</span>
<span style="top:467.30px;font-size:8.8px;line-height:8.8px;right:329.50px;transform-origin:100% 0;transform:scaleX(0.9500);">65 536</span>
<span style="top:467.30px;font-size:8.8px;line-height:8.8px;right:260.50px;transform-origin:100% 0;transform:scaleX(1.0491);">Обычный</span>
<span style="top:480.55px;font-size:8.8px;line-height:8.8px;left:7.00px;transform-origin:0 0;transform:scaleX(0.9201);">System</span>
<span style="top:480.55px;font-size:8.8px;line-height:8.8px;left:147.20px;transform-origin:0 0;transform:scaleX(0.9700);">4</span>
<span style="top:480.55px;font-size:8.8px;line-height:8.8px;left:186.50px;transform-origin:0 0;transform:scaleX(0.9661);">C:\$LogFile (Журнал тома NTFS)</span>
<span style="top:480.55px;font-size:8.8px;line-height:8.8px;right:466.00px;transform-origin:100% 0;transform:scaleX(0.9500);">0</span>
<span style="top:480.55px;font-size:8.8px;line-height:8.8px;right:397.50px;transform-origin:100% 0;transform:scaleX(0.9500);">47 231</span>
<span style="top:480.55px;font-size:8.8px;line-height:8.8px;right:329.50px;transform-origin:100% 0;transform:scaleX(0.9500);">47 231</span>
<span style="top:480.55px;font-size:8.8px;line-height:8.8px;right:260.50px;transform-origin:100% 0;transform:scaleX(1.0491);">Обычный</span>
<span style="top:493.80px;font-size:8.8px;line-height:8.8px;left:7.00px;transform-origin:0 0;transform:scaleX(0.9201);">System</span>
<span style="top:493.80px;font-size:8.8px;line-height:8.8px;left:147.20px;transform-origin:0 0;transform:scaleX(0.9700);">4</span>
<span style="top:493.80px;font-size:8.8px;line-height:8.8px;left:186.50px;transform-origin:0 0;transform:scaleX(1.0064);">C:\Users\Администратор\AppData\Local\1C\1cv8\392e23bd-2aae-4...</span>
<span style="top:493.80px;font-size:8.8px;line-height:8.8px;right:466.00px;transform-origin:100% 0;transform:scaleX(0.9500);">0</span>
<span style="top:493.80px;font-size:8.8px;line-height:8.8px;right:397.50px;transform-origin:100% 0;transform:scaleX(0.9500);">45 875</span>
<span style="top:493.80px;font-size:8.8px;line-height:8.8px;right:329.50px;transform-origin:100% 0;transform:scaleX(0.9500);">45 875</span>
<span style="top:493.80px;font-size:8.8px;line-height:8.8px;right:260.50px;transform-origin:100% 0;transform:scaleX(1.0491);">Обычный</span>
<span style="top:507.05px;font-size:8.8px;line-height:8.8px;left:7.00px;transform-origin:0 0;transform:scaleX(0.9201);">System</span>
<span style="top:507.05px;font-size:8.8px;line-height:8.8px;left:147.20px;transform-origin:0 0;transform:scaleX(0.9700);">4</span>
<span style="top:507.05px;font-size:8.8px;line-height:8.8px;left:186.50px;transform-origin:0 0;transform:scaleX(1.0064);">C:\Users\Администратор\AppData\Local\1C\1cv8\392e23bd-2aae-4...</span>
<span style="top:507.05px;font-size:8.8px;line-height:8.8px;right:466.00px;transform-origin:100% 0;transform:scaleX(0.9500);">0</span>
<span style="top:507.05px;font-size:8.8px;line-height:8.8px;right:397.50px;transform-origin:100% 0;transform:scaleX(0.9500);">11 443</span>
<span style="top:507.05px;font-size:8.8px;line-height:8.8px;right:329.50px;transform-origin:100% 0;transform:scaleX(0.9500);">11 443</span>
<span style="top:507.05px;font-size:8.8px;line-height:8.8px;right:260.50px;transform-origin:100% 0;transform:scaleX(1.0491);">Обычный</span>
<span style="top:520.30px;font-size:8.8px;line-height:8.8px;left:7.00px;transform-origin:0 0;transform:scaleX(0.9215);">1cv8c.exe</span>
<span style="top:520.30px;font-size:8.8px;line-height:8.8px;left:147.20px;transform-origin:0 0;transform:scaleX(0.9700);">3748</span>
<span style="top:520.30px;font-size:8.8px;line-height:8.8px;left:186.50px;transform-origin:0 0;transform:scaleX(0.9947);">C:\Program Files (x86)\1cv8\8.3.4.437\bin\basic.dll</span>
<span style="top:520.30px;font-size:8.8px;line-height:8.8px;right:466.00px;transform-origin:100% 0;transform:scaleX(0.9500);">10 923</span>
<span style="top:520.30px;font-size:8.8px;line-height:8.8px;right:397.50px;transform-origin:100% 0;transform:scaleX(0.9500);">0</span>
<span style="top:520.30px;font-size:8.8px;line-height:8.8px;right:329.50px;transform-origin:100% 0;transform:scaleX(0.9500);">10 923</span>
<span style="top:520.30px;font-size:8.8px;line-height:8.8px;right:260.50px;transform-origin:100% 0;transform:scaleX(1.0491);">Обычный</span>
<span style="top:533.55px;font-size:8.8px;line-height:8.8px;left:7.00px;transform-origin:0 0;transform:scaleX(0.9201);">System</span>
<span style="top:533.55px;font-size:8.8px;line-height:8.8px;left:147.20px;transform-origin:0 0;transform:scaleX(0.9700);">4</span>
<span style="top:533.55px;font-size:8.8px;line-height:8.8px;left:186.50px;transform-origin:0 0;transform:scaleX(0.9946);">E:\1cv8_OLD\ofis-tex 2012\1Cv8JobScheduler\jobs.dat</span>
<span style="top:533.55px;font-size:8.8px;line-height:8.8px;right:466.00px;transform-origin:100% 0;transform:scaleX(0.9500);">8 917</span>
<span style="top:533.55px;font-size:8.8px;line-height:8.8px;right:397.50px;transform-origin:100% 0;transform:scaleX(0.9500);">640</span>
<span style="top:533.55px;font-size:8.8px;line-height:8.8px;right:329.50px;transform-origin:100% 0;transform:scaleX(0.9500);">9 557</span>
<span style="top:533.55px;font-size:8.8px;line-height:8.8px;right:260.50px;transform-origin:100% 0;transform:scaleX(1.0491);">Обычный</span>
<span style="top:546.80px;font-size:8.8px;line-height:8.8px;left:7.00px;transform-origin:0 0;transform:scaleX(0.9201);">System</span>
<span style="top:546.80px;font-size:8.8px;line-height:8.8px;left:147.20px;transform-origin:0 0;transform:scaleX(0.9700);">4</span>
<span style="top:546.80px;font-size:8.8px;line-height:8.8px;left:186.50px;transform-origin:0 0;transform:scaleX(0.9813);">E:\1cv8_OLD\ofis-tex 2012\1Cv8FTxt\vocabularyPartial.dat</span>
<span style="top:546.80px;font-size:8.8px;line-height:8.8px;right:466.00px;transform-origin:100% 0;transform:scaleX(0.9500);">7 851</span>
<span style="top:546.80px;font-size:8.8px;line-height:8.8px;right:397.50px;transform-origin:100% 0;transform:scaleX(0.9500);">0</span>
<span style="top:546.80px;font-size:8.8px;line-height:8.8px;right:329.50px;transform-origin:100% 0;transform:scaleX(0.9500);">7 851</span>
<span style="top:546.80px;font-size:8.8px;line-height:8.8px;right:260.50px;transform-origin:100% 0;transform:scaleX(1.0491);">Обычный</span>
<span style="top:560.05px;font-size:8.8px;line-height:8.8px;left:7.00px;transform-origin:0 0;transform:scaleX(0.9215);">1cv8c.exe</span>
<span style="top:560.05px;font-size:8.8px;line-height:8.8px;left:147.20px;transform-origin:0 0;transform:scaleX(0.9700);">3748</span>
<span style="top:560.05px;font-size:8.8px;line-height:8.8px;left:186.50px;transform-origin:0 0;transform:scaleX(0.9939);">C:\Program Files (x86)\1cv8\8.3.4.437\bin\backbas.dll</span>
<span style="top:560.05px;font-size:8.8px;line-height:8.8px;right:466.00px;transform-origin:100% 0;transform:scaleX(0.9500);">7 509</span>
<span style="top:560.05px;font-size:8.8px;line-height:8.8px;right:397.50px;transform-origin:100% 0;transform:scaleX(0.9500);">0</span>
<span style="top:560.05px;font-size:8.8px;line-height:8.8px;right:329.50px;transform-origin:100% 0;transform:scaleX(0.9500);">7 509</span>
<span style="top:560.05px;font-size:8.8px;line-height:8.8px;right:260.50px;transform-origin:100% 0;transform:scaleX(1.0491);">Обычный</span>
<span style="top:573.30px;font-size:8.8px;line-height:8.8px;left:7.00px;transform-origin:0 0;transform:scaleX(0.9215);">1cv8c.exe</span>
<span style="top:573.30px;font-size:8.8px;line-height:8.8px;left:147.20px;transform-origin:0 0;transform:scaleX(0.9700);">3748</span>
<span style="top:573.30px;font-size:8.8px;line-height:8.8px;left:186.50px;transform-origin:0 0;transform:scaleX(0.9881);">E:\$Mft (Основная таблица файлов NTFS)</span>
<span style="top:573.30px;font-size:8.8px;line-height:8.8px;right:466.00px;transform-origin:100% 0;transform:scaleX(0.9500);">4 726</span>
<span style="top:573.30px;font-size:8.8px;line-height:8.8px;right:397.50px;transform-origin:100% 0;transform:scaleX(0.9500);">0</span>
<span style="top:573.30px;font-size:8.8px;line-height:8.8px;right:329.50px;transform-origin:100% 0;transform:scaleX(0.9500);">4 726</span>
<span style="top:573.30px;font-size:8.8px;line-height:8.8px;right:260.50px;transform-origin:100% 0;transform:scaleX(1.0491);">Обычный</span>
<span style="top:586.55px;font-size:8.8px;line-height:8.8px;left:7.00px;transform-origin:0 0;transform:scaleX(0.9201);">System</span>
<span style="top:586.55px;font-size:8.8px;line-height:8.8px;left:147.20px;transform-origin:0 0;transform:scaleX(0.9700);">4</span>
<span style="top:586.55px;font-size:8.8px;line-height:8.8px;left:186.50px;transform-origin:0 0;transform:scaleX(0.9422);">C:\TEMP\1\v8_608A_a.tmp</span>
<span style="top:586.55px;font-size:8.8px;line-height:8.8px;right:466.00px;transform-origin:100% 0;transform:scaleX(0.9500);">0</span>
<span style="top:586.55px;font-size:8.8px;line-height:8.8px;right:397.50px;transform-origin:100% 0;transform:scaleX(0.9500);">4 096</span>
<span style="top:586.55px;font-size:8.8px;line-height:8.8px;right:329.50px;transform-origin:100% 0;transform:scaleX(0.9500);">4 096</span>
<span style="top:586.55px;font-size:8.8px;line-height:8.8px;right:260.50px;transform-origin:100% 0;transform:scaleX(1.0491);">Обычный</span>
<span style="top:599.80px;font-size:8.8px;line-height:8.8px;left:7.00px;transform-origin:0 0;transform:scaleX(0.9201);">System</span>
<span style="top:599.80px;font-size:8.8px;line-height:8.8px;left:147.20px;transform-origin:0 0;transform:scaleX(0.9700);">4</span>
<span style="top:599.80px;font-size:8.8px;line-height:8.8px;left:186.50px;transform-origin:0 0;transform:scaleX(0.9422);">C:\TEMP\1\v8_608A_5.tmp</span>
<span style="top:599.80px;font-size:8.8px;line-height:8.8px;right:466.00px;transform-origin:100% 0;transform:scaleX(0.9500);">0</span>
<span style="top:599.80px;font-size:8.8px;line-height:8.8px;right:397.50px;transform-origin:100% 0;transform:scaleX(0.9500);">4 096</span>
<span style="top:599.80px;font-size:8.8px;line-height:8.8px;right:329.50px;transform-origin:100% 0;transform:scaleX(0.9500);">4 096</span>
<span style="top:599.80px;font-size:8.8px;line-height:8.8px;right:260.50px;transform-origin:100% 0;transform:scaleX(1.0491);">Обычный</span>
<span style="top:613.05px;font-size:8.8px;line-height:8.8px;left:7.00px;transform-origin:0 0;transform:scaleX(0.9215);">1cv8c.exe</span>
<span style="top:613.05px;font-size:8.8px;line-height:8.8px;left:147.20px;transform-origin:0 0;transform:scaleX(0.9700);">3748</span>
<span style="top:613.05px;font-size:8.8px;line-height:8.8px;left:186.50px;transform-origin:0 0;">C:\Program Files (x86)\1cv8\8.3.4.437\bin\backend.dll</span>
<span style="top:613.05px;font-size:8.8px;line-height:8.8px;right:466.00px;transform-origin:100% 0;transform:scaleX(0.9500);">3 781</span>
<span style="top:613.05px;font-size:8.8px;line-height:8.8px;right:397.50px;transform-origin:100% 0;transform:scaleX(0.9500);">0</span>
<span style="top:613.05px;font-size:8.8px;line-height:8.8px;right:329.50px;transform-origin:100% 0;transform:scaleX(0.9500);">3 781</span>
<span style="top:613.05px;font-size:8.8px;line-height:8.8px;right:260.50px;transform-origin:100% 0;transform:scaleX(1.0491);">Обычный</span>
<span style="top:626.30px;font-size:8.8px;line-height:8.8px;left:7.00px;transform-origin:0 0;transform:scaleX(0.9201);">System</span>
<span style="top:626.30px;font-size:8.8px;line-height:8.8px;left:147.20px;transform-origin:0 0;transform:scaleX(0.9700);">4</span>
<span style="top:626.30px;font-size:8.8px;line-height:8.8px;left:186.50px;transform-origin:0 0;transform:scaleX(0.9696);">E:\$LogFile (Журнал тома NTFS)</span>
<span style="top:626.30px;font-size:8.8px;line-height:8.8px;right:466.00px;transform-origin:100% 0;transform:scaleX(0.9500);">0</span>
<span style="top:626.30px;font-size:8.8px;line-height:8.8px;right:397.50px;transform-origin:100% 0;transform:scaleX(0.9500);">3 614</span>
<span style="top:626.30px;font-size:8.8px;line-height:8.8px;right:329.50px;transform-origin:100% 0;transform:scaleX(0.9500);">3 614</span>
<span style="top:626.30px;font-size:8.8px;line-height:8.8px;right:260.50px;transform-origin:100% 0;transform:scaleX(1.0491);">Обычный</span>
<span style="top:639.55px;font-size:8.8px;line-height:8.8px;left:7.00px;transform-origin:0 0;transform:scaleX(0.9201);">System</span>
<span style="top:639.55px;font-size:8.8px;line-height:8.8px;left:147.20px;transform-origin:0 0;transform:scaleX(0.9700);">4</span>
<span style="top:639.55px;font-size:8.8px;line-height:8.8px;left:186.50px;transform-origin:0 0;transform:scaleX(0.9902);">C:\$BitMap (Карта свободного места NTFS)</span>
<span style="top:639.55px;font-size:8.8px;line-height:8.8px;right:466.00px;transform-origin:100% 0;transform:scaleX(0.9500);">0</span>
<span style="top:639.55px;font-size:8.8px;line-height:8.8px;right:397.50px;transform-origin:100% 0;transform:scaleX(0.9500);">2 696</span>
<span style="top:639.55px;font-size:8.8px;line-height:8.8px;right:329.50px;transform-origin:100% 0;transform:scaleX(0.9500);">2 696</span>
<span style="top:639.55px;font-size:8.8px;line-height:8.8px;right:260.50px;transform-origin:100% 0;transform:scaleX(1.0491);">Обычный</span>
<span style="top:674.43px;font-size:10.0px;line-height:10.0px;color:#1c1c1c;left:6.80px;transform-origin:0 0;transform:scaleX(1.0055);-webkit-text-stroke-width:0.1px;">Запоминающие устройства</span>
<span style="top:693.25px;font-size:8.8px;line-height:8.8px;left:7.00px;transform-origin:0 0;transform:scaleX(1.0510);">Логический диск</span>
<span style="top:693.25px;font-size:8.8px;line-height:8.8px;left:147.00px;transform-origin:0 0;transform:scaleX(1.0313);">Физический диск</span>
<span style="top:693.25px;font-size:8.8px;line-height:8.8px;right:642.00px;transform-origin:100% 0;transform:scaleX(1.0271);">Активное вре...</span>
<span style="top:693.25px;font-size:8.8px;line-height:8.8px;right:564.00px;transform-origin:100% 0;transform:scaleX(0.9861);">Свободно (МБ)</span>
<span style="top:693.25px;font-size:8.8px;line-height:8.8px;right:486.50px;transform-origin:100% 0;transform:scaleX(0.9442);">Всего (МБ)</span>
<span style="top:693.25px;font-size:8.8px;line-height:8.8px;right:408.00px;transform-origin:100% 0;transform:scaleX(1.0242);">Длина очеред...</span>
<span style="top:706.45px;font-size:8.8px;line-height:8.8px;left:7.00px;transform-origin:0 0;transform:scaleX(0.9300);">E: C:</span>
<span style="top:706.45px;font-size:8.8px;line-height:8.8px;left:147.20px;transform-origin:0 0;transform:scaleX(0.9700);">0</span>
<span style="top:706.45px;font-size:8.8px;line-height:8.8px;right:642.50px;transform-origin:100% 0;transform:scaleX(0.9500);">48.25</span>
<span style="top:706.45px;font-size:8.8px;line-height:8.8px;right:564.50px;transform-origin:100% 0;transform:scaleX(0.9500);">331 173</span>
<span style="top:706.45px;font-size:8.8px;line-height:8.8px;right:486.50px;transform-origin:100% 0;transform:scaleX(0.9500);">476 586</span>
<span style="top:706.45px;font-size:8.8px;line-height:8.8px;right:408.50px;transform-origin:100% 0;transform:scaleX(0.9500);">3.01</span>
<span style="top:719.65px;font-size:8.8px;line-height:8.8px;left:7.00px;transform-origin:0 0;transform:scaleX(0.9300);">D:</span>
<span style="top:719.65px;font-size:8.8px;line-height:8.8px;left:147.20px;transform-origin:0 0;transform:scaleX(0.9700);">1</span>
<span style="top:719.65px;font-size:8.8px;line-height:8.8px;right:642.50px;transform-origin:100% 0;transform:scaleX(0.9500);">0.00</span>
<span style="top:719.65px;font-size:8.8px;line-height:8.8px;right:564.50px;transform-origin:100% 0;transform:scaleX(0.9500);">32 721</span>
<span style="top:719.65px;font-size:8.8px;line-height:8.8px;right:486.50px;transform-origin:100% 0;transform:scaleX(0.9500);">122 102</span>
<span style="top:719.65px;font-size:8.8px;line-height:8.8px;right:408.50px;transform-origin:100% 0;transform:scaleX(0.9500);">0.00</span>
<span style="top:732.85px;font-size:8.8px;line-height:8.8px;left:7.00px;transform-origin:0 0;transform:scaleX(0.9300);">F:</span>
<span style="top:732.85px;font-size:8.8px;line-height:8.8px;left:147.20px;transform-origin:0 0;transform:scaleX(0.9700);">2</span>
<span style="top:732.85px;font-size:8.8px;line-height:8.8px;right:642.50px;transform-origin:100% 0;transform:scaleX(0.9500);">0.00</span>
<span style="top:732.85px;font-size:8.8px;line-height:8.8px;right:564.50px;transform-origin:100% 0;transform:scaleX(0.9500);">15 308</span>
<span style="top:732.85px;font-size:8.8px;line-height:8.8px;right:486.50px;transform-origin:100% 0;transform:scaleX(0.9500);">15 444</span>
<span style="top:732.85px;font-size:8.8px;line-height:8.8px;right:408.50px;transform-origin:100% 0;transform:scaleX(0.9500);">0.00</span>
<span style="top:66.87px;font-size:9.6px;line-height:9.6px;left:928.00px;transform-origin:0 0;transform:scaleX(0.9217);">Вид</span>
<span style="top:88.34px;font-size:9.4px;line-height:9.4px;color:#111;left:840.50px;transform-origin:0 0;transform:scaleX(1.0054);">Диск</span>
<span style="top:88.34px;font-size:9.4px;line-height:9.4px;color:#111;right:30.20px;transform-origin:100% 0;transform:scaleX(1.0045);">1 Мбит/с</span>
<span style="top:182.44px;font-size:9.4px;line-height:9.4px;color:#111;left:840.50px;transform-origin:0 0;transform:scaleX(0.9415);">60 секунд</span>
<span style="top:182.24px;font-size:9.4px;line-height:9.4px;color:#111;right:30.20px;transform-origin:100% 0;transform:scaleX(0.9500);">0</span>
<span style="top:196.09px;font-size:9.4px;line-height:9.4px;color:#111;left:840.50px;transform-origin:0 0;transform:scaleX(0.9609);">Длина очереди диска 0 (E: ...</span>
<span style="top:196.09px;font-size:9.4px;line-height:9.4px;color:#111;right:30.20px;transform-origin:100% 0;transform:scaleX(0.7665);">1</span>
<span style="top:289.99px;font-size:9.4px;line-height:9.4px;color:#111;right:30.20px;transform-origin:100% 0;transform:scaleX(0.9500);">0</span>
<span style="top:303.84px;font-size:9.4px;line-height:9.4px;color:#111;left:840.50px;transform-origin:0 0;transform:scaleX(0.9653);">Длина очереди диска 1 (D:)</span>
<span style="top:303.84px;font-size:9.4px;line-height:9.4px;color:#111;right:30.20px;transform-origin:100% 0;transform:scaleX(0.7665);">1</span>
<span style="top:397.74px;font-size:9.4px;line-height:9.4px;color:#111;right:30.20px;transform-origin:100% 0;transform:scaleX(0.9500);">0</span>
<span style="top:411.59px;font-size:9.4px;line-height:9.4px;color:#111;left:840.50px;transform-origin:0 0;transform:scaleX(0.9654);">Длина очереди диска 2 (F:)</span>
<span style="top:411.59px;font-size:9.4px;line-height:9.4px;color:#111;right:30.20px;transform-origin:100% 0;transform:scaleX(0.7665);">1</span>
<span style="top:505.49px;font-size:9.4px;line-height:9.4px;color:#111;right:30.20px;transform-origin:100% 0;transform:scaleX(0.9500);">0</span>
</div></body></html>
